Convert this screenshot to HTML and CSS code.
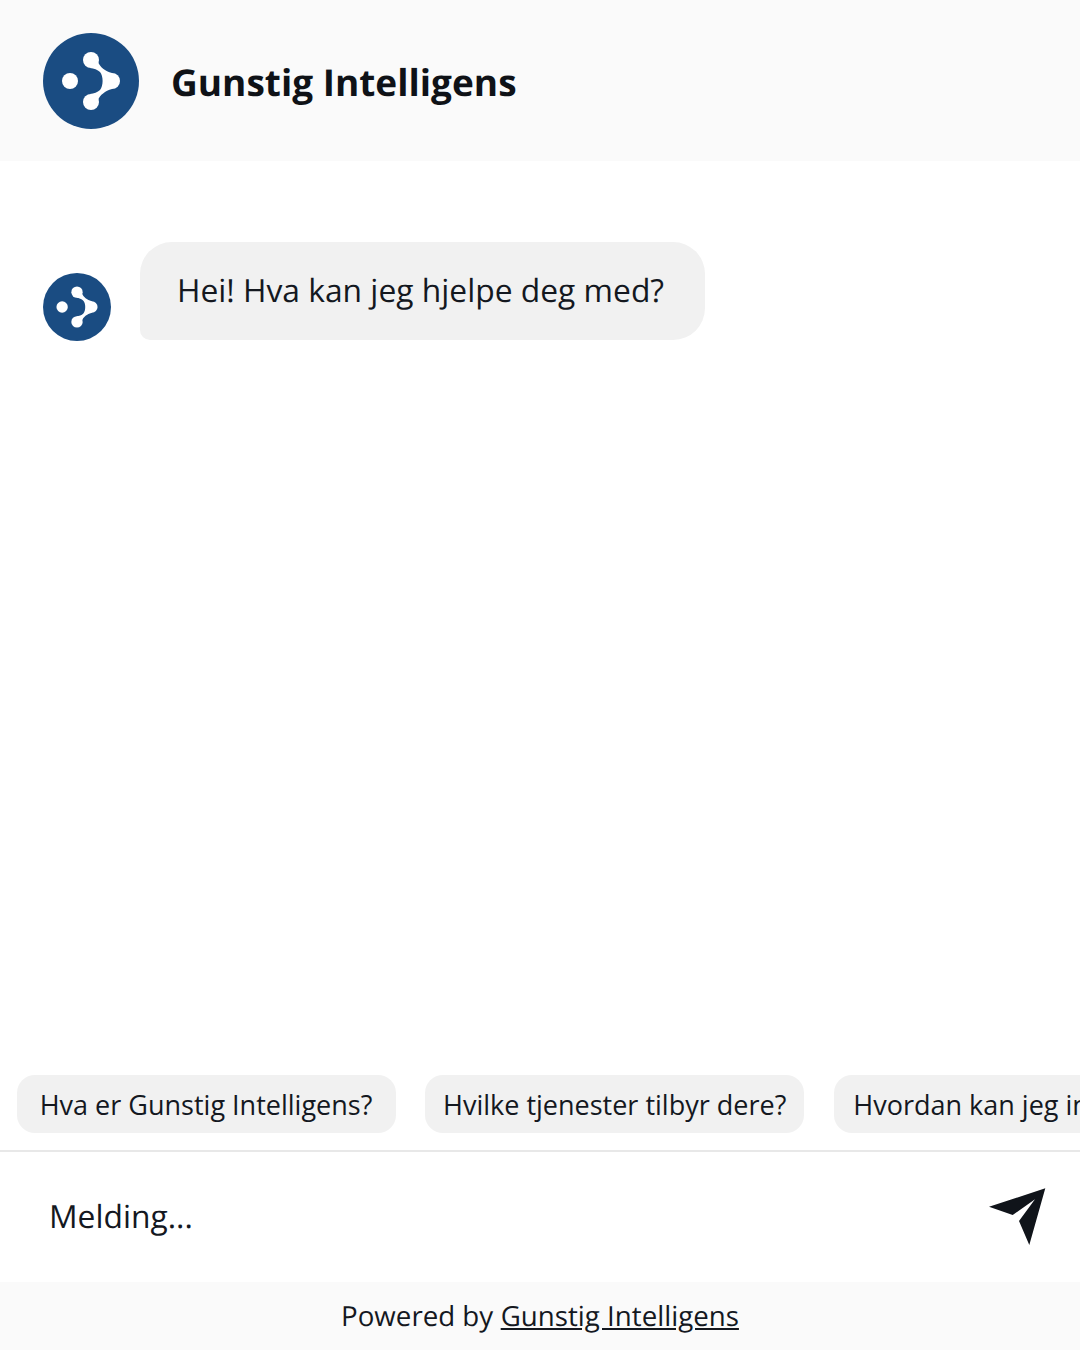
FILE: index.html
```html
<!DOCTYPE html>
<html lang="no">
<head>
    <meta charset="UTF-8">
    <meta name="viewport" content="width=device-width, initial-scale=1.0">
    <title>Gunstig Intelligens</title>
    <link rel="stylesheet" href="styles.css">
</head>
<body>
    <div class="chat">
        <header class="chat-header">
            <svg class="logo logo-large" viewBox="0 0 96 96" xmlns="http://www.w3.org/2000/svg">
                <circle cx="48" cy="48" r="48" fill="#1a4c82"/>
                <circle cx="27" cy="48" r="8" fill="#fff"/>
                <circle cx="48" cy="27" r="8" fill="#fff"/>
                <circle cx="48" cy="69" r="8" fill="#fff"/>
                <circle cx="69" cy="48" r="8" fill="#fff"/>
                <path d="M55 29 C57 34 62 38 69 40 L69 56 C62 58 57 62 55 67 L47 61 C51 60.5 54.5 59.5 57 57 C60.5 53 60.5 43 57 39 C54.5 36.5 51 35.5 47 35 Z" fill="#fff"/>
            </svg>
            <h1>Gunstig Intelligens</h1>
        </header>

        <main class="messages">
            <div class="message">
                <svg class="logo logo-small" viewBox="0 0 96 96" xmlns="http://www.w3.org/2000/svg">
                    <circle cx="48" cy="48" r="48" fill="#1a4c82"/>
                    <circle cx="27" cy="48" r="8" fill="#fff"/>
                    <circle cx="48" cy="27" r="8" fill="#fff"/>
                    <circle cx="48" cy="69" r="8" fill="#fff"/>
                    <circle cx="69" cy="48" r="8" fill="#fff"/>
                    <path d="M55 29 C57 34 62 38 69 40 L69 56 C62 58 57 62 55 67 L47 61 C51 60.5 54.5 59.5 57 57 C60.5 53 60.5 43 57 39 C54.5 36.5 51 35.5 47 35 Z" fill="#fff"/>
                </svg>
                <div class="bubble">Hei! Hva kan jeg hjelpe deg med?</div>
            </div>
        </main>

        <div class="suggestions">
            <button class="chip">Hva er Gunstig Intelligens?</button>
            <button class="chip">Hvilke tjenester tilbyr dere?</button>
            <button class="chip chip-last">Hvordan kan jeg integrere dette?</button>
        </div>

        <form class="composer">
            <span class="placeholder">Melding...</span>
            <svg class="send" viewBox="0 0 60 60" xmlns="http://www.w3.org/2000/svg">
                <path d="M58.3 2.3 L2 20.7 L25.7 29 L48 13.3 L32 35 L42.3 59 Z" fill="#10141a"/>
            </svg>
        </form>

        <footer class="chat-footer">Powered by <a href="#">Gunstig Intelligens</a></footer>
    </div>
</body>
</html>
```

FILE: styles.css
```css
* {
    box-sizing: border-box;
}
html, body {
    margin: 0;
    height: 100%;
}
body {
    font-family: "Open Sans", Arial, sans-serif;
    color: #14181f;
    background-color: #fff;
    overflow: hidden;
    text-rendering: geometricPrecision;
}
.chat {
    display: flex;
    flex-direction: column;
    height: 1350px;
}
.chat-header {
    display: flex;
    align-items: center;
    gap: 32px;
    height: 161px;
    padding: 1px 43px 0;
    background-color: #fafafa;
}
.chat-header h1 {
    margin: 2px 0 0;
    font-size: 37px;
    font-weight: 700;
    line-height: 44px;
    color: #0f1217;
}
.logo {
    flex-shrink: 0;
    display: block;
}
.logo-large {
    width: 96px;
    height: 96px;
}
.logo-small {
    width: 68px;
    height: 68px;
    margin-top: 31px;
}
.messages {
    flex: 1;
    padding: 81px 43px 0;
}
.message {
    display: flex;
    gap: 29px;
    align-items: flex-start;
}
.bubble {
    padding: 26px 41px 26px 37px;
    font-size: 31.8px;
    line-height: 46px;
    background-color: #f1f1f1;
    border-radius: 32px 32px 32px 10px;
}
.suggestions {
    display: flex;
    gap: 29.5px;
    padding: 0 16.5px 17px;
    overflow: hidden;
    border-bottom: 2px solid #e8e8e8;
}
.chip {
    flex-shrink: 0;
    min-width: 379px;
    height: 58px;
    padding: 0 18px;
    font-family: inherit;
    font-size: 27px;
    color: inherit;
    white-space: nowrap;
    background-color: #f1f1f1;
    border: none;
    border-radius: 18px;
}
.chip-last {
    padding-left: 19.5px;
}
.composer {
    display: flex;
    align-items: center;
    justify-content: space-between;
    height: 130px;
    padding: 0 33px 0 49px;
}
.placeholder {
    font-size: 31.8px;
    margin-top: -2px;
}
.send {
    width: 60px;
    height: 60px;
    margin-top: -2px;
}
.chat-footer {
    display: flex;
    align-items: center;
    justify-content: center;
    gap: 7.5px;
    height: 68px;
    padding-bottom: 1px;
    font-size: 27.7px;
    background-color: #fafafa;
}
.chat-footer a {
    color: inherit;
}
```
